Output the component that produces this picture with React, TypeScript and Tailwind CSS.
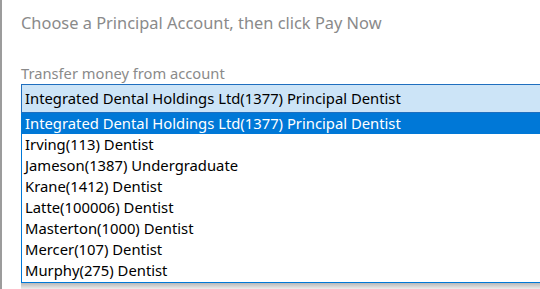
import React from "react"

const accounts = [
  "Irving(113) Dentist",
  "Jameson(1387) Undergraduate",
  "Krane(1412) Dentist",
  "Latte(100006) Dentist",
  "Masterton(1000) Dentist",
  "Mercer(107) Dentist",
  "Murphy(275) Dentist",
]

const principal = "Integrated Dental Holdings Ltd(1377) Principal Dentist"

export default function App() {
  return (
    <div className="w-[540px] h-[289px] overflow-hidden bg-white border-l-2 border-[#9c9c9c] font-['Noto_Sans',sans-serif]">
      <div className="pl-[19px]">
        <h1 className="pt-[11px] text-[16.4px] leading-[24px] text-[#8a8a8a] font-normal">
          Choose a Principal Account, then click Pay Now
        </h1>

        <p className="mt-[28px] text-[14.7px] leading-[20px] text-[#8a8a8a]">Transfer money from account</p>

        {/* selected value */}
        <div className="mt-[1px] h-[29px] w-[560px] border border-[#1f6fbf] bg-[#cce4f7] pl-[3px] flex items-center text-[14.8px] text-black">
          {principal}
        </div>

        {/* open list */}
        <div className="w-[560px] border-x border-b border-[#0078d7] bg-white pb-[1px] text-[14.8px]">
          <div className="h-[21px] bg-[#0078d7] text-white pl-[3px] flex items-center">{principal}</div>
          {accounts.map((a) => (
            <div key={a} className="h-[21px] pl-[3px] flex items-center text-black">
              {a}
            </div>
          ))}
        </div>
        <div className="h-[6px] w-[560px] bg-gradient-to-b from-[#b8b8b8] to-[#ececec]" />
      </div>
    </div>
  )
}
